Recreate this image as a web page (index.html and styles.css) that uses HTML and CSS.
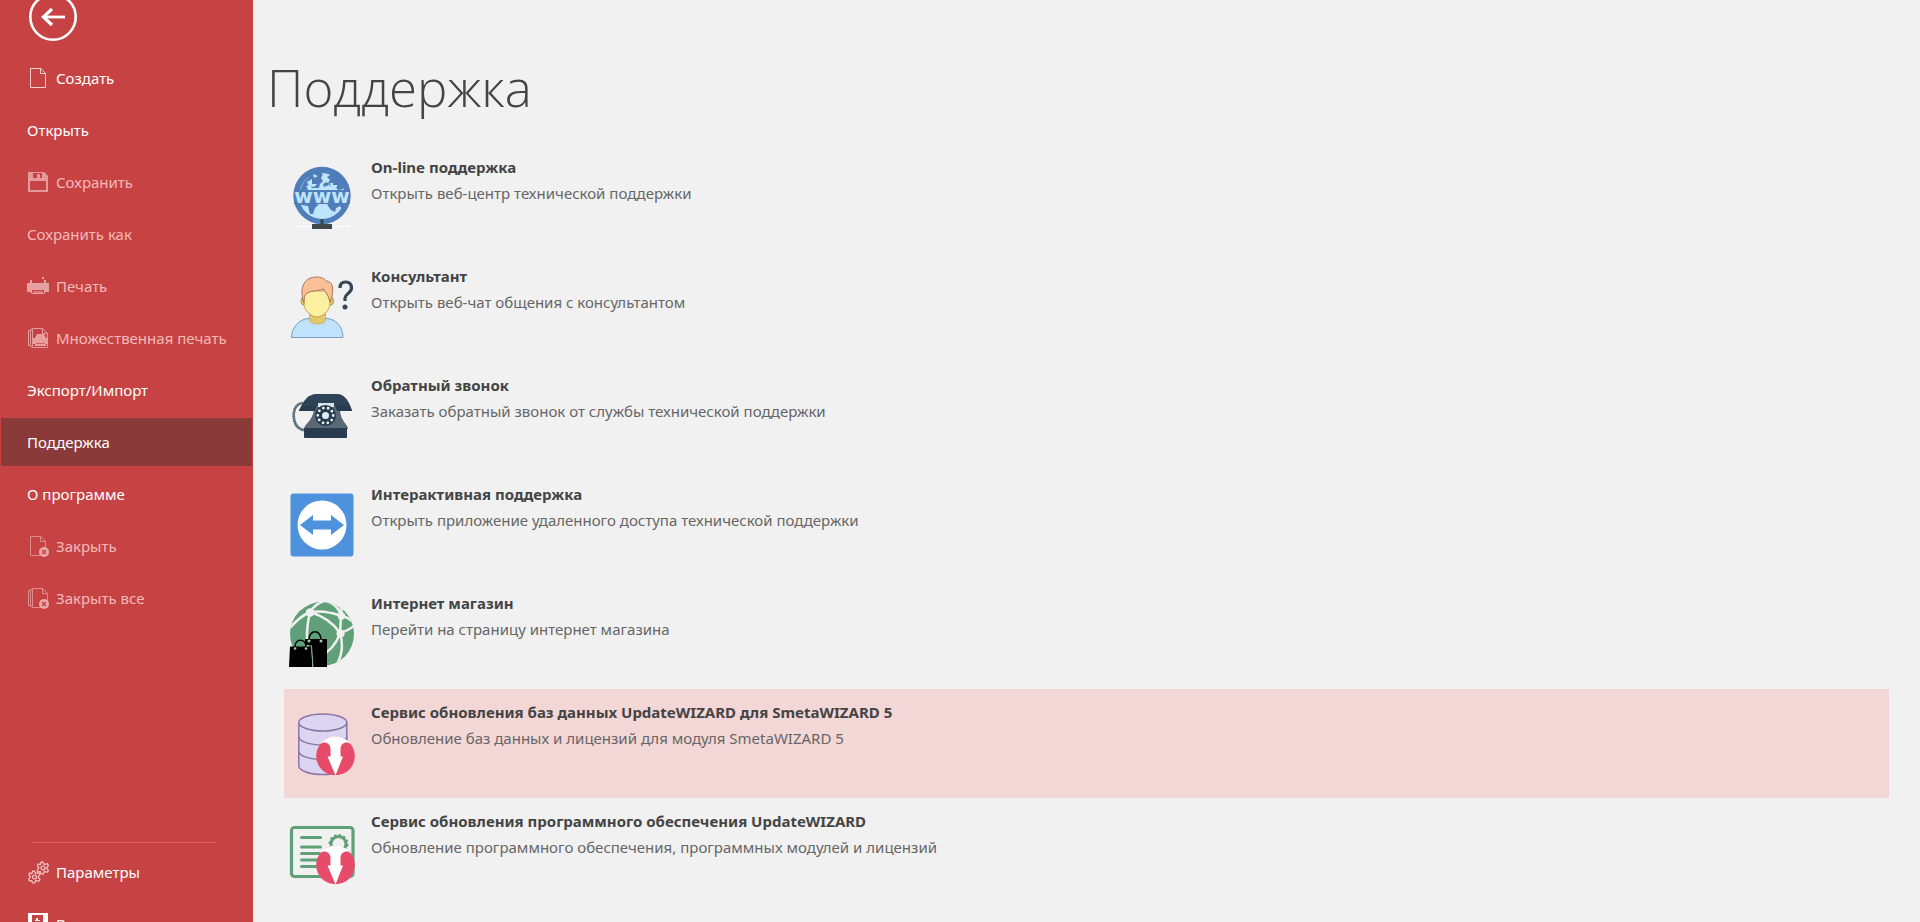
FILE: index.html
```html
<!DOCTYPE html>
<html lang="ru">
<head>
<meta charset="utf-8">
<meta name="viewport" content="width=device-width, initial-scale=1">
<title>Поддержка</title>
<link rel="stylesheet" href="styles.css">
</head>
<body>
<div class="app">
  <aside class="sidebar">
    <button class="back" type="button" aria-label="Назад">
      <svg viewBox="0 0 48 48" width="48" height="48" fill="none" stroke="#fff"><circle cx="24" cy="24" r="22.7" stroke-width="2.6"/><path d="M36 24H14" stroke-width="2.8"/><path d="M23 16l-8.600 8 8.600 8" stroke-width="3.200"/></svg>
    </button>
    <nav class="menu">
      <button class="item" type="button">
        <svg class="glyph" viewBox="0 0 22 22" fill="none" stroke="#fff" stroke-opacity=".75"><path d="M3.500 1.500h10.500l4.500 5v14h-15zM13.500 1.500v5h5"/></svg>
        Создать</button>
      <button class="item" type="button">Открыть</button>
      <button class="item" type="button" disabled>
        <svg class="glyph" viewBox="0 0 22 22" fill="#e49a9a"><path fill-rule="evenodd" d="M1 1h16l4 4v16H1zM6 2v5h9V2zM3 10v9h16v-9z"/><path d="M10 3h3v4h-3z"/></svg>
        Сохранить</button>
      <button class="item" type="button" disabled>Сохранить как</button>
      <button class="item" type="button" disabled>
        <svg class="glyph" viewBox="0 0 22 22" fill="#e6a0a0"><path d="M3 5h2v3h12V5h2v3h3v9h-3l-2 2H5l-2-2H0V8h3zM15 2h2v2h-2z"/><path d="M5 15h12v3H5z" fill="#c74343"/><path d="M6 16h10v2H6z" fill="#da7c7c"/></svg>
        Печать</button>
      <button class="item" type="button" disabled>
        <svg class="glyph" viewBox="0 0 22 22" fill="none" stroke="#e49a9a"><path d="M5.500 1.500h10l5 5v14h-15zM15.500 1.500v5h5M5 2.500H3.500v17H5M3 3.500H1.500v15H3"/><path d="M6 17v-6h2l2-4h7l2 4h2v6h-2v2H8v-2z" fill="#e6a0a0" stroke="none"/><path d="M9 16h9v1H9z" fill="#d06060" stroke="none"/></svg>
        Множественная печать</button>
      <button class="item" type="button">Экспорт/Импорт</button>
      <button class="item selected" type="button" aria-current="page">Поддержка</button>
      <button class="item" type="button">О программе</button>
      <button class="item" type="button" disabled>
        <svg class="glyph" viewBox="0 0 22 22" fill="none" stroke="#e08c8c"><path d="M3.500 1.500h10.500l4.500 5v14h-15zM13.500 1.500v5h5"/><circle cx="17" cy="17" r="5" fill="#e9a9a9" stroke="none"/><path d="M15 15l4 4m0-4l-4 4" stroke="#c74343" stroke-width="1.500"/></svg>
        Закрыть</button>
      <button class="item" type="button" disabled>
        <svg class="glyph" viewBox="0 0 22 22" fill="none" stroke="#e08c8c"><path d="M5.500 1.500h10l5 5v14h-15zM15.500 1.500v5h5M5 2.500H3.500v17H5M3 3.500H1.500v15H3"/><circle cx="17" cy="17" r="5" fill="#e9a9a9" stroke="none"/><path d="M15 15l4 4m0-4l-4 4" stroke="#c74343" stroke-width="1.500"/></svg>
        Закрыть все</button>
    </nav>
    <nav class="menu menu-bottom">
      <button class="item" type="button">
        <svg class="glyph" viewBox="0 0 22 22" fill="none" stroke="#f4cccc" stroke-width="1.200">
          <g transform="translate(1.500 0)"><path d="M6 10.200l1.200 2.300 3.200-.8 1 1.700-1.700 2.600 1.700 2.600-1 1.600-3.200-.5L6 22l-2-.2-.8-2.200-2.400.2-.6-2 1.700-2-1.500-2.200.8-1.600 2 .5 1-2.300z"/><circle cx="6" cy="16" r="2"/></g>
          <g transform="translate(10 -9)"><path d="M6 10.200l1.200 2.300 3.200-.8 1 1.700-1.700 2.600 1.700 2.600-1 1.600-3.200-.5L6 22l-2-.2-.8-2.200-2.400.2-.6-2 1.700-2-1.500-2.200.8-1.600 2 .5 1-2.300z"/><circle cx="6" cy="16" r="2"/></g>
        </svg>
        Параметры</button>
      <button class="item" type="button">
        <svg class="glyph" viewBox="0 0 22 22"><path d="M1 0h20v21H1z" fill="#fff"/><path d="M5 2h11v17H5z" fill="#c74343"/><path d="M9 5h2v2H9zM8 7h5v1H8z" fill="#fff"/></svg>
        Выход</button>
    </nav>
  </aside>

  <main class="content">
    <h1 class="title">Поддержка</h1>
    <div class="services">
      <button class="service" type="button">
        <svg class="picture" viewBox="0 0 64 64">
          <path d="M4 60.500h56" stroke="#fff"/>
          <circle cx="32" cy="29.500" r="28.700" fill="#4f7db9"/>
          <circle cx="32" cy="30" r="23" fill="#bfe4fe"/>
          <path d="M10 24l4-8 7-7 8-3 4 2-2 4 2 3-3 3-1 4h-7l-2-3-4 1 2 3-3 3zM37 11l3-2-1-3 5 2 7 7 3 8-6 1-3-4-4 1-3-4 2-3zM17 15l3-2 2 3-3 2zM33 18l4-2 2 3-5 2z" fill="#4f7db9"/>
          <path d="M17 16l5-3v5h5l-3 3-5-1zM40 17h3v2h4v2h-6zM23 8l5 2-4 2z" fill="#bfe4fe"/>
          <path d="M9 34h20l-1 5-3 3-2 6h-3l-2-8-7-1zM36 34h20l-4 9-2-3-4 2-1 4-4-2-3-4z" fill="#4f7db9"/>
          <path d="M4 24h56v14H4z" fill="#4f7db9"/>
          <text class="www" x="32" y="37" text-anchor="middle">www</text>
          <path d="M30.500 53h3v5H42v5H22v-5h8.500z" fill="#3e484d"/>
        </svg>
        <span class="label"><strong class="name">On-line поддержка</strong><span class="about">Открыть веб-центр технической поддержки</span></span>
      </button>
      <button class="service" type="button">
        <svg class="picture" viewBox="0 0 64 64" stroke-linejoin="round">
          <path d="M1.500 62.500C1.500 51 11 43.500 19 43.500h17C45 43.500 53 51 53 62.500z" fill="#bfe3fc" stroke="#7d9cc0"/>
          <path d="M19.500 39h16v7c-3 4-13 4-16 0z" fill="#e2c96b" stroke="#c3a553" stroke-width=".7"/>
          <ellipse cx="13.500" cy="26" rx="2.500" ry="4" fill="#e2c96b" stroke="#b19a56"/>
          <ellipse cx="41" cy="26" rx="2.500" ry="4" fill="#e2c96b" stroke="#b19a56"/>
          <path d="M14 16h26v13c0 6-7 13-13 13S14 35 14 29z" fill="#fdefa0" stroke="#bda55c"/>
          <path d="M14 28c-5-14-1-26 13-26 4 0 8 2 9 4 7 0 9 9 4 21l-2-6c-1-3-4-5-4-7-4 2-13 1-17 4-3 3-3 6-3 10z" fill="#fdbf96" stroke="#a6765d"/>
          <path d="M50 13c0-4 2-6 5.500-6s6 2 6 6c0 5-6.500 6-6.500 10v3" fill="none" stroke="#354656" stroke-width="3.200"/><circle cx="55" cy="32" r="2.500" fill="#354656"/>
        </svg>
        <span class="label"><strong class="name">Консультант</strong><span class="about">Открыть веб-чат общения с консультантом</span></span>
      </button>
      <button class="service" type="button">
        <svg class="picture" viewBox="0 -1 64 64">
          <path d="M13 18C4 19 3 28 4 34c1 7 6 12 13 11" fill="none" stroke="#6f8391" stroke-width="2.600"/>
          <path d="M13 18C4 19 3 28 4 34c1 7 6 12 13 11" fill="none" stroke="#2d4052" stroke-width="2.600" stroke-dasharray="1 1.500" opacity=".5"/>
          <path d="M24 17h26v7c0 12 8 15 8 20H14c0-5 9-8 10-20z" fill="#5b6875"/>
          <path d="M9 25c3-5 5-10 10-14l4-1h26l4 1c6 5 7 9 9 14v1H47c-1-3-2-7-5-8H30c-3 1-4 5-5 8H9z" fill="#293b4e"/>
          <path d="M16 15c5-5 6-6 11-6h19c5 0 7 1 11 6l2 6H13z" fill="#2e4358"/>
          <path d="M28 18h16v4H28z" fill="#d9e6ed"/>
          <rect x="14" y="43" width="43" height="10" rx="1" fill="#293b4e"/>
          <circle cx="35.500" cy="30.500" r="10.500" fill="#293b4e"/>
          <circle cx="35.500" cy="30.500" r="7.700" fill="none" stroke="#eaf4fa" stroke-width="2.800" stroke-linecap="round" stroke-dasharray="0 4.838"/>
          <circle cx="35.500" cy="30.500" r="3.500" fill="#d9effa"/>
        </svg>
        <span class="label"><strong class="name">Обратный звонок</strong><span class="about">Заказать обратный звонок от службы технической поддержки</span></span>
      </button>
      <button class="service" type="button">
        <svg class="picture" viewBox="0 0 64 64">
          <rect x=".5" y=".5" width="63" height="63" rx="3" fill="#4e91dc"/>
          <circle cx="32" cy="32" r="24.500" fill="#fff"/>
          <path d="M10 32l13-10v5.500h18V22l13 10-13 10v-5.500H23V42z" fill="#4e91dc"/>
        </svg>
        <span class="label"><strong class="name">Интерактивная поддержка</strong><span class="about">Открыть приложение удаленного доступа технической поддержки</span></span>
      </button>
      <button class="service" type="button">
        <svg class="picture" viewBox="0 0 64 64">
          <defs><clipPath id="globe"><circle cx="32" cy="32" r="32"/></clipPath></defs>
          <g clip-path="url(#globe)">
            <path d="M0 0h64v64H0z" fill="#5fa078"/>
            <g fill="none" stroke="#f1f1f1" stroke-width="2.500"><path d="M0 26Q9 15 20 10Q25 2 34-1M20 10Q36 8 51 14Q60 15 66 24M20 10Q40 16 50 31Q60 28 66 22M20 10Q15 32 18 48M50 31Q45 47 28 56M50 31Q55 48 47 62M36-1Q48 2 51 14L50 31M51 14Q53 5 47 0"/></g>
            <g fill="#f1f1f1"><circle cx="20" cy="10.500" r="4.200"/><circle cx="51.500" cy="14" r="3.800"/><circle cx="50.500" cy="31.500" r="4"/></g>
          </g>
          <path d="M15 37h22v28H23L21.500 43.500 15 43z" fill="#000"/>
          <path d="M0 44.500h21L22.500 65H-1z" fill="#000"/>
          <path d="M21.500 43.500L23 64.500" stroke="#a5cbb3" stroke-width=".8"/>
          <g fill="none" stroke="#000" stroke-width="1.600"><path d="M19 38c0-11 12-11 12 0M5 45c0-9 11-9 11 0"/></g>
          <g fill="#a5cbb3"><circle cx="19" cy="39" r="1.500"/><circle cx="31" cy="39" r="1.500"/><circle cx="5" cy="46.500" r="1.300"/><circle cx="16" cy="46.500" r="1.300"/></g>
        </svg>
        <span class="label"><strong class="name">Интернет магазин</strong><span class="about">Перейти на страницу интернет магазина</span></span>
      </button>
      <button class="service highlighted" type="button">
        <svg class="picture" viewBox="0 -2 64 64">
          <g fill="#dcd5f2" stroke="#8b75a7" stroke-width="1.500"><path d="M8.800 9.500v43.500c0 4.500 11 8.500 24 8.500s24-4 24-8.500V9.500"/><path d="M8.800 38c0 5 11 8.500 24 8.500s24-3.500 24-8.500M8.800 23.500c0 5 11 8.500 24 8.500s24-3.500 24-8.500" fill="none"/><ellipse cx="32.800" cy="9.500" rx="24" ry="8.500"/></g>
          <circle cx="45.500" cy="43" r="19.300" fill="#e84b6a"/>
          <path d="M37.500 43.500l8 19 7.500-19h-2.500V36c0-6 6-8.500 10.500-5C57 26 51 23.500 45.500 23.500S34 26 30 31c4.500-3.500 10.500-1 10.500 5v7.500z" fill="#fff"/>
        </svg>
        <span class="label"><strong class="name">Сервис обновления баз данных UpdateWIZARD для SmetaWIZARD 5</strong><span class="about">Обновление баз данных и лицензий для модуля SmetaWIZARD 5</span></span>
      </button>
      <button class="service" type="button">
        <svg class="picture" viewBox="0 -2 64 64">
          <rect x="1.500" y="5.500" width="61.500" height="49" rx="3" fill="none" stroke="#60a078" stroke-width="3.200"/>
          <path d="M11.500 15.500h19M11.500 25h19M11.500 31.500h19M11.500 38h19M11.500 44.500h19" stroke="#60a078" stroke-width="3" stroke-linecap="round"/>
          <circle cx="48.500" cy="22" r="7.500" fill="none" stroke="#60a078" stroke-width="3"/><circle cx="48.500" cy="22" r="9" fill="none" stroke="#60a078" stroke-width="2" stroke-dasharray="2.500 2.200"/>
          <circle cx="45.500" cy="43" r="19.300" fill="#e84b6a"/>
          <path d="M37.500 43.500l8 19 7.500-19h-2.500V36c0-6 6-8.500 10.500-5C57 26 51 23.500 45.500 23.500S34 26 30 31c4.500-3.500 10.500-1 10.500 5v7.500z" fill="#fff"/>
        </svg>
        <span class="label"><strong class="name">Сервис обновления программного обеспечения UpdateWIZARD</strong><span class="about">Обновление программного обеспечения, программных модулей и лицензий</span></span>
      </button>
    </div>
  </main>
</div>
</body>
</html>
```
FILE: styles.css
```css
* {
  box-sizing: border-box;
}

body {
  margin: 0;
  height: 100vh;
  overflow: hidden;
  background: #f1f1f1;
  color: #444;
  font: 15px/24px "Noto Sans", "Open Sans", sans-serif;
}

button {
  border: 0;
  margin: 0;
  padding: 0;
  background: none;
  color: inherit;
  font: inherit;
  text-align: left;
  cursor: pointer;
}

svg {
  display: block;
  flex: none;
  overflow: visible;
}

.app {
  display: flex;
  min-height: 100vh;
}

/* The column is scrolled slightly: it starts above the window and ends below it. */
.sidebar {
  display: flex;
  flex-direction: column;
  flex: none;
  width: 253px;
  height: calc(100vh + 33px);
  margin-top: -7px;
  background: #c74343;
  color: #fff;
}

.back {
  width: 48px;
  height: 48px;
  margin: 0 0 13px 29px;
  border-radius: 50%;
}

.menu {
  display: flex;
  flex-direction: column;
  gap: 4px;
  padding: 0 1px;
}

.menu-bottom {
  margin-top: auto;
}

.menu-bottom::before {
  content: "";
  height: 1px;
  margin: 0 36px 1px 31px;
  background: #de6666;
}

.item {
  display: flex;
  align-items: center;
  gap: 7px;
  height: 48px;
  padding: 0 26px;
  white-space: nowrap;
}

.item:disabled {
  color: #f5b9b9;
}

.selected {
  background: #8b3a3a;
}

.glyph {
  width: 22px;
  height: 22px;
}

.content {
  flex: 1;
  min-width: 0;
  padding: 49px 31px 0 14px;
}

.title {
  margin: 0 0 19px;
  font-family: "Open Sans", "Noto Sans", sans-serif;
  font-size: 51px;
  font-weight: 300;
  line-height: 76px;
}

.services {
  display: flex;
  flex-direction: column;
  margin-left: 17px;
}

.service {
  display: flex;
  gap: 17px;
  height: 109px;
  padding: 11px 6px;
}

.highlighted {
  background: #f3d6d6;
}

.picture {
  width: 64px;
  height: 64px;
  margin-top: 11px;
}

.www {
  fill: #bfe4fe;
  font: bold 20px "DejaVu Sans", sans-serif;
}

.label {
  display: flex;
  flex-direction: column;
  gap: 2px;
}

.about {
  color: #666;
}
```
